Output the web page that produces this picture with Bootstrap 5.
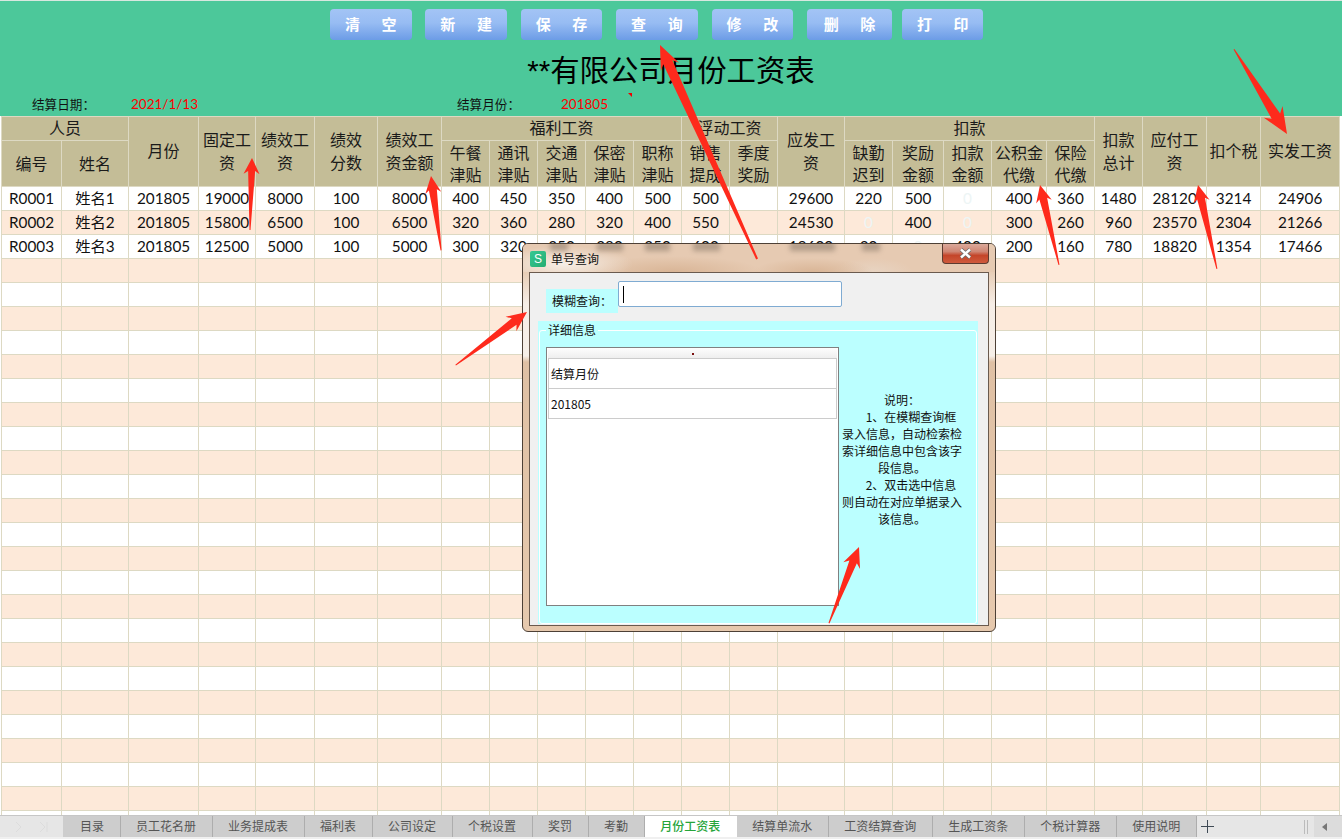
<!DOCTYPE html>
<html lang="zh">
<head>
<meta charset="utf-8">
<title>月份工资表</title>
<link rel="stylesheet" href="https://cdn.jsdelivr.net/npm/bootstrap@5.3.0/dist/css/bootstrap.min.css">
<style>
html,body{height:100%;overflow:hidden}
body{font-family:Lato,"Noto Sans CJK SC",sans-serif;color:#111;background:#f0f0f0}
.mid-punct{font-family:"Noto Sans CJK TC",sans-serif}
.sheet-top{height:116px;background:#4cc89a;border-top:1px solid #d8e8e0;flex:none}
.btn-row{padding:8px 0 0 330px;gap:13.9px}
.hd-btn{width:81.5px;height:31px;padding:0;border:0;border-radius:4px;color:#fff;font-weight:700;font-size:15px;line-height:31px;word-spacing:18px;background:linear-gradient(180deg,#a3c4f5 0,#97bcf3 45%,#6c9ce6 100%)}
.hd-btn:hover{color:#fff;background:linear-gradient(180deg,#a3c4f5 0,#97bcf3 45%,#6c9ce6 100%)}
.hd-del{width:85px;margin-right:-3.9px}
.sheet-title{font-size:29.4px;line-height:40px;margin:11px 0 0;font-weight:400;color:#000;font-family:"Liberation Sans","Noto Sans CJK SC",sans-serif}
.info-row{height:16px;margin-top:5px;padding-left:32px;font-size:12.6px;line-height:16px;color:#111}
.info-l1{width:99px}.info-v1{width:326px}.info-l2{width:104px}
.info-val{color:#f00;font-size:13.5px}
.grid-wrap{height:699px;flex:none;padding-left:1px;overflow:hidden;background:#fff}
.pay-grid{width:1338px;table-layout:fixed;border-collapse:collapse;margin:0;border-color:#ddd9c3}
.pay-grid>thead>tr>th,.pay-grid>tbody>tr>td{padding:0;border:1px solid #ddd9c3;text-align:center;vertical-align:middle;white-space:nowrap;box-shadow:none}
.pay-grid>thead>tr>th{background:#c4bd97;font-weight:400;font-size:16px;line-height:23px;color:#1a1a1a;padding-bottom:2px}
.pay-grid>thead>tr.hr1>th{height:24px}
.pay-grid>thead>tr.hr1>th[colspan]{line-height:20px}
.pay-grid>thead>tr.hr2>th{height:46px;line-height:22px;padding-bottom:0}
.pay-grid>tbody>tr>td{height:24px;background:#fff;font-size:15.3px;line-height:21px;color:#111;padding-bottom:0}
.pay-grid>tbody>tr:nth-child(even)>td{background:#fde9d9}
.pay-grid>tbody>tr>td.code-cell{text-align:left;padding-left:7px}
.pay-grid>tbody>tr>td.ghost-num{color:#edf5f5}
.sheet-tabs{height:22px;flex:none;background:#e6e6e6;border-top:1px solid #c6c6c6;font-size:12px}
.tab-nav{width:63px;flex:none}
.tab-item{padding:0 15.5px;line-height:21px;background:#cdcdcd;border-right:1px solid #adadad;color:#555;white-space:nowrap;flex:none}
.tab-first{padding-left:17px}
.tab-on{background:#fff;color:#27a53a;border-right-color:#fff;font-weight:500}
.tab-add{width:22px;flex:none}
.tab-right{width:38px;flex:none;margin-left:auto}
.tab-scroll{background:#dcdcdc;width:30px;height:100%}
.tab-split{width:4px;height:14px;border-left:1px solid #bbb;border-right:1px solid #bbb;margin-right:6px}
.dlg-win{position:absolute;left:522px;top:243px;width:474px;height:389px;border:1px solid #4d4036;border-radius:6px;background:linear-gradient(180deg,#e8cfb9 0,#e7cdb6 28px,#f6ede6 60px,#f6efe8 112px,#dfc0a4 118px,#e6c9ae 100%);display:flex;flex-direction:column;overflow:hidden;font-family:"Noto Sans CJK SC",sans-serif;font-size:12px;color:#111}
.dlg-bar{height:28px;flex:none;position:relative;padding-left:7px;background:radial-gradient(ellipse 70px 18px at 40px 20px,#f6eee6,transparent),radial-gradient(ellipse 90px 16px at 150px 28px,#d9b596,transparent),radial-gradient(ellipse 60px 14px at 290px 28px,#d9b596,transparent),radial-gradient(ellipse 40px 14px at 350px 28px,#e8d4c2,transparent),#e6cab2}
.dlg-ico{width:16px;height:16px;border-radius:2px;margin-top:7px;background:linear-gradient(135deg,#38c893,#24ad72);color:#fff;font:400 12px/16px "Liberation Sans",sans-serif;text-align:center;flex:none}
.dlg-name{margin-left:5px;line-height:28px;padding-top:1px;color:#111}
.dlg-x{width:47px;height:20px;margin-left:auto;margin-right:6px;border:1px solid #5c3b30;border-top:0;border-radius:0 0 4px 4px;background:linear-gradient(180deg,#dba99a 0,#cf8674 40%,#c4452a 60%,#cf5a3c 100%);position:relative;flex:none}
.dlg-smudge{position:absolute;top:-2px;height:9px;background:rgba(85,75,65,.36);filter:blur(2.5px)}
.dlg-inner{flex:1 1 auto;margin:0 6px 5px;border:1px solid #6a5a4e;background:#f0f0f0;min-height:0}
.find-label{width:72px;height:24px;margin:16px 0 0 16px;background:#bbffff;line-height:24px;padding-left:6px;white-space:nowrap}
.find-input{width:224px;height:26px;margin-top:8px;border:1px solid #7fabd2;border-radius:2px;padding:0;background:linear-gradient(#000,#000) 4px 4px/1px 17px no-repeat #fff;outline:0}
.detail-box{margin:8px 10px 0 8px;height:303px;background:#bbffff;padding:0 1px}
.detail-set{border:1px solid #fff;border-radius:3px;height:303px;padding:0 6px}
.detail-set legend{float:none;width:auto;font-size:12px;line-height:18px;margin:0;padding:0 2px}
.rec-list{width:293px;height:259px;margin-top:8px;border:1px solid #808080;background:#fff;padding:0 1px;flex:none}
.rec-head{height:10px;background:linear-gradient(180deg,#fdfdfd,#eee);position:relative}
.rec-dot{position:absolute;left:144px;top:5px;width:2px;height:2px;background:#7a1010}
.rec-row{height:30px;line-height:29px;padding-left:2px;border:1px solid #ccc;border-top:0}
.rec-row.first{border-top:1px solid #ccc;height:31px}
.note-txt{width:120px;margin:52px 0 0 3px;line-height:17px;text-align:center;white-space:nowrap;flex:none}
.mark-layer{position:absolute;left:0;top:0;width:1342px;height:839px;pointer-events:none}
</style>
</head>
<body class="position-relative">
<div class="d-flex flex-column vh-100 overflow-hidden">
  <header class="sheet-top">
    <div class="d-flex btn-row">
      <button type="button" class="btn hd-btn">清 空</button>
      <button type="button" class="btn hd-btn">新 建</button>
      <button type="button" class="btn hd-btn">保 存</button>
      <button type="button" class="btn hd-btn">查 询</button>
      <button type="button" class="btn hd-btn">修 改</button>
      <button type="button" class="btn hd-btn hd-del">删 除</button>
      <button type="button" class="btn hd-btn">打 印</button>
    </div>
    <h1 class="sheet-title text-center">**有限公司月份工资表</h1>
    <div class="d-flex info-row">
      <span class="info-l1">结算日期<span class="mid-punct">：</span></span><span class="info-val info-v1">2021/1/13</span>
      <span class="info-l2">结算月份<span class="mid-punct">：</span></span><span class="info-val">201805</span>
    </div>
  </header>

  <div class="grid-wrap">
    <table class="table table-bordered pay-grid">
      <colgroup>
        <col style="width:60px"><col style="width:67px"><col style="width:70px"><col style="width:57px"><col style="width:59px"><col style="width:63px"><col style="width:64px">
        <col style="width:48px"><col style="width:48px"><col style="width:48px"><col style="width:48px"><col style="width:48px"><col style="width:48px"><col style="width:48px">
        <col style="width:67px"><col style="width:48px"><col style="width:51px"><col style="width:48px"><col style="width:55px"><col style="width:48px"><col style="width:48px">
        <col style="width:64px"><col style="width:54px"><col style="width:79px">
      </colgroup>
      <thead>
        <tr class="hr1">
          <th colspan="2">人员</th><th rowspan="2">月份</th><th rowspan="2">固定工<br>资</th><th rowspan="2">绩效工<br>资</th><th rowspan="2">绩效<br>分数</th><th rowspan="2">绩效工<br>资金额</th>
          <th colspan="5">福利工资</th><th colspan="2">浮动工资</th><th rowspan="2">应发工<br>资</th><th colspan="5">扣款</th>
          <th rowspan="2">扣款<br>总计</th><th rowspan="2">应付工<br>资</th><th rowspan="2">扣个税</th><th rowspan="2">实发工资</th>
        </tr>
        <tr class="hr2">
          <th>编号</th><th>姓名</th>
          <th>午餐<br>津贴</th><th>通讯<br>津贴</th><th>交通<br>津贴</th><th>保密<br>津贴</th><th>职称<br>津贴</th>
          <th>销售<br>提成</th><th>季度<br>奖励</th>
          <th>缺勤<br>迟到</th><th>奖励<br>金额</th><th>扣款<br>金额</th><th>公积金<br>代缴</th><th>保险<br>代缴</th>
        </tr>
      </thead>
      <tbody id="payBody">
        <tr><td class="code-cell">R0001</td><td>姓名1</td><td>201805</td><td>19000</td><td>8000</td><td>100</td><td>8000</td><td>400</td><td>450</td><td>350</td><td>400</td><td>500</td><td>500</td><td></td><td>29600</td><td>220</td><td>500</td><td class="ghost-num">0</td><td>400</td><td>360</td><td>1480</td><td>28120</td><td>3214</td><td>24906</td></tr>
        <tr><td class="code-cell">R0002</td><td>姓名2</td><td>201805</td><td>15800</td><td>6500</td><td>100</td><td>6500</td><td>320</td><td>360</td><td>280</td><td>320</td><td>400</td><td>550</td><td></td><td>24530</td><td class="ghost-num">0</td><td>400</td><td class="ghost-num">0</td><td>300</td><td>260</td><td>960</td><td>23570</td><td>2304</td><td>21266</td></tr>
        <tr><td class="code-cell">R0003</td><td>姓名3</td><td>201805</td><td>12500</td><td>5000</td><td>100</td><td>5000</td><td>300</td><td>320</td><td>350</td><td>280</td><td>350</td><td>600</td><td></td><td>19600</td><td>20</td><td class="ghost-num">0</td><td>400</td><td>200</td><td>160</td><td>780</td><td>18820</td><td>1354</td><td>17466</td></tr>
      </tbody>
    </table>
  </div>

  <nav class="d-flex sheet-tabs">
    <div class="tab-nav d-flex align-items-center justify-content-center gap-3">
      <svg width="8" height="12" viewBox="0 0 8 12"><path d="M1 1l5 5-5 5" fill="none" stroke="#dcdcdc"/></svg>
      <svg width="10" height="12" viewBox="0 0 10 12"><path d="M1 1l5 5-5 5M8 1v10" fill="none" stroke="#dcdcdc"/></svg>
    </div>
    <div class="tab-item tab-first">目录</div>
    <div class="tab-item">员工花名册</div>
    <div class="tab-item">业务提成表</div>
    <div class="tab-item">福利表</div>
    <div class="tab-item">公司设定</div>
    <div class="tab-item">个税设置</div>
    <div class="tab-item">奖罚</div>
    <div class="tab-item">考勤</div>
    <div class="tab-item tab-on">月份工资表</div>
    <div class="tab-item">结算单流水</div>
    <div class="tab-item">工资结算查询</div>
    <div class="tab-item">生成工资条</div>
    <div class="tab-item">个税计算器</div>
    <div class="tab-item">使用说明</div>
    <div class="tab-add d-flex align-items-center justify-content-center">
      <svg width="13" height="13" viewBox="0 0 13 13"><path d="M6.5 0v13M0 6.5h13" stroke="#3f4a55" fill="none"/></svg>
    </div>
    <div class="tab-right d-flex align-items-center">
      <span class="tab-split"></span>
      <span class="tab-scroll d-flex align-items-center ps-2">
        <svg width="5" height="8" viewBox="0 0 5 8"><path d="M5 0v8L0 4z" fill="#777"/></svg>
      </span>
    </div>
  </nav>
</div>

<div class="dlg-win">
  <div class="dlg-bar d-flex">
    <span class="dlg-smudge" style="left:27px;width:18px"></span>
    <span class="dlg-smudge" style="left:74px;width:26px"></span>
    <span class="dlg-smudge" style="left:122px;width:25px"></span>
    <span class="dlg-smudge" style="left:170px;width:27px"></span>
    <span class="dlg-smudge" style="left:267px;width:45px"></span>
    <span class="dlg-smudge" style="left:339px;width:18px"></span>
    <span class="dlg-ico">S</span>
    <span class="dlg-name">单号查询</span>
    <span class="dlg-x d-flex align-items-center justify-content-center">
      <svg width="15" height="11" viewBox="0 0 15 11"><path d="M3 1.5l9 8M12 1.5l-9 8" stroke="#6c6c6c" stroke-width="4" fill="none"/><path d="M3 1.5l9 8M12 1.5l-9 8" stroke="#fff" stroke-width="2.4" fill="none"/></svg>
    </span>
  </div>
  <div class="dlg-inner">
    <div class="d-flex">
      <label class="find-label" for="findBox">模糊查询<span class="mid-punct">：</span></label>
      <input id="findBox" class="find-input" type="text">
    </div>
    <div class="detail-box">
      <fieldset class="detail-set">
        <legend>详细信息</legend>
        <div class="d-flex">
          <div class="rec-list">
            <div class="rec-head"><span class="rec-dot"></span></div>
            <div class="rec-row first">结算月份</div>
            <div class="rec-row">201805</div>
          </div>
          <div class="note-txt">说明<span class="mid-punct">：</span><br>&emsp;&ensp;1、在模糊查询框<br>录入信息<span class="mid-punct">，</span>自动检索检<br>索详细信息中包含该字<br>段信息。<br>&emsp;&ensp;2、双击选中信息<br>则自动在对应单据录入<br>该信息。</div>
        </div>
      </fieldset>
    </div>
  </div>
</div>

<svg class="mark-layer" viewBox="0 0 1342 839" fill="#fe2a1c" aria-hidden="true">
  <polygon points="628,93 632,93 632,97" fill="#e00"/>
  <polygon transform="translate(660,45) rotate(-24.4)" points="0,0 10,24 5,19 1,235 -1,235 -5,19 -10,24"/>
  <polygon transform="translate(252,158) rotate(1.6)" points="0,0 8,16 3.5,13 .5,72 -.5,72 -3.5,13 -8,16"/>
  <polygon transform="translate(431,176) rotate(-7.7)" points="0,0 8,17 4,14 .5,75 -.5,75 -4,14 -8,17"/>
  <polygon transform="translate(1287,134) rotate(148)" points="0,0 11,26 5,21 .5,100 -.5,100 -5,21 -11,26"/>
  <polygon transform="translate(1040,185) rotate(-13.4)" points="0,0 8,17 4,14 .5,82 -.5,82 -4,14 -8,17"/>
  <polygon transform="translate(1198,185) rotate(-12.7)" points="0,0 8,17 4,14 .5,86 -.5,86 -4,14 -8,17"/>
  <polygon transform="translate(527,312) rotate(53.3)" points="0,0 9,20 4,16 .5,89 -.5,89 -4,16 -9,20"/>
  <polygon transform="translate(859,547) rotate(21.5)" points="0,0 9,20 4,16 .5,82 -.5,82 -4,16 -9,20"/>
</svg>

<script src="https://cdn.jsdelivr.net/npm/bootstrap@5.3.0/dist/js/bootstrap.bundle.min.js"></script>
<script>
  var body = document.getElementById('payBody');
  for (var r = 0; r < 24; r++) {
    var tr = document.createElement('tr');
    for (var c = 0; c < 24; c++) tr.appendChild(document.createElement('td'));
    body.appendChild(tr);
  }
</script>
</body>
</html>
